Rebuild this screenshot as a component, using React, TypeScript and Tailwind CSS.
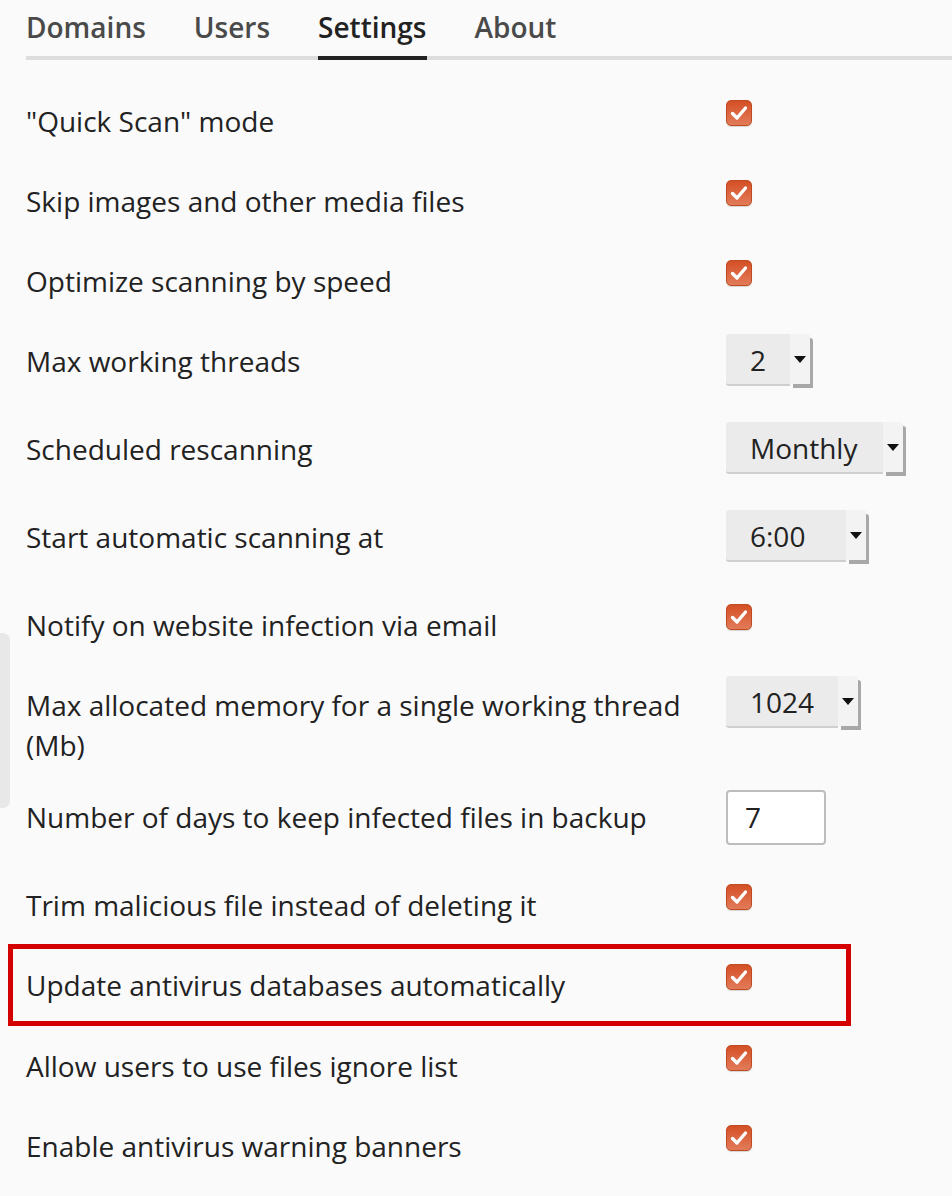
import { type ReactNode } from "react";

type Control =
  | { kind: "check" }
  | { kind: "select"; value: string; width: string }
  | { kind: "input"; value: string };

type Row = {
  label: string;
  control: Control;
  rowClass: string;
  highlight?: boolean;
};

const rows: Row[] = [
  { label: '"Quick Scan" mode', control: { kind: "check" }, rowClass: "h-[80px] items-center" },
  { label: "Skip images and other media files", control: { kind: "check" }, rowClass: "h-[80px] items-center" },
  { label: "Optimize scanning by speed", control: { kind: "check" }, rowClass: "h-[80px] items-center" },
  {
    label: "Max working threads",
    control: { kind: "select", value: "2", width: "w-[64px]" },
    rowClass: "h-[80px] items-center",
  },
  {
    label: "Scheduled rescanning",
    control: { kind: "select", value: "Monthly", width: "w-[157px]" },
    rowClass: "h-[96px] items-center",
  },
  {
    label: "Start automatic scanning at",
    control: { kind: "select", value: "6:00", width: "w-[120px]" },
    rowClass: "h-[80px] items-center",
  },
  { label: "Notify on website infection via email", control: { kind: "check" }, rowClass: "h-[96px] items-center" },
  {
    label: "Max allocated memory for a single working thread (Mb)",
    control: { kind: "select", value: "1024", width: "w-[112px]" },
    rowClass: "h-[104px] items-start pt-[12px]",
  },
  { label: "Number of days to keep infected files in backup", control: { kind: "input", value: "7" }, rowClass: "h-[80px] items-center" },
  { label: "Trim malicious file instead of deleting it", control: { kind: "check" }, rowClass: "h-[87px] items-center pt-[8px]" },
  { label: "Update antivirus databases automatically", control: { kind: "check" }, rowClass: "h-[82px] items-center", highlight: true },
  { label: "Allow users to use files ignore list", control: { kind: "check" }, rowClass: "h-[80px] items-center" },
  { label: "Enable antivirus warning banners", control: { kind: "check" }, rowClass: "h-[80px] items-center" },
];

function Checkbox() {
  return (
    <div className="mb-[16px] flex h-[26px] w-[26px] items-center justify-center rounded-[5px] border border-[#c04a22] bg-gradient-to-b from-[#d44f24] to-[#e27b58] shadow-[0_1px_1px_rgba(0,0,0,0.15)]">
      <svg width="18" height="16" viewBox="0 0 18 16" fill="none">
        <path
          d="M2.5 8.5 L7 13 L15.5 3"
          stroke="white"
          strokeWidth="3.4"
          strokeLinecap="round"
          strokeLinejoin="round"
        />
      </svg>
    </div>
  );
}

function Select({
  value,
  width,
  className,
}: {
  value: string;
  width: string;
  className?: string;
}) {
  return (
    <div className={"flex h-[54px] items-start " + (className ?? "")}>
      <div
        className={
          "flex h-[52px] items-center rounded-l-[3px] border-b-2 border-[#cfcfcf] bg-[#ebebeb] pt-[2px] pl-[24px] text-[28px] text-[#222] " +
          width
        }
      >
        {value}
      </div>
      <div className="flex h-[50px] w-[20px] items-center justify-center rounded-tr-[3px] bg-[#f3f3f3] shadow-[3px_4px_0_#a8a8a8]">
        <div className="h-0 w-0 border-t-[7px] border-r-[6px] border-l-[6px] border-t-[#111] border-r-transparent border-l-transparent" />
      </div>
    </div>
  );
}

function renderControl(control: Control, twoLine: boolean): ReactNode {
  if (control.kind === "check") return <Checkbox />;
  if (control.kind === "select")
    return (
      <Select
        value={control.value}
        width={control.width}
        className={twoLine ? "-mt-[9px]" : ""}
      />
    );
  return (
    <input
      readOnly
      value={control.value}
      className="h-[55px] w-[100px] rounded-[4px] border-2 border-[#bdbdbd] bg-white pl-[17px] text-[28px] text-[#222] outline-none"
      style={{ fontFamily: '"Open Sans", sans-serif' }}
    />
  );
}

export default function App() {
  const tabs = ["Domains", "Users", "Settings", "About"];

  return (
    <div
      className="relative h-[1196px] w-[952px] overflow-hidden bg-[#fafafa] text-[#222]"
      style={{ fontFamily: '"Open Sans", "Liberation Sans", sans-serif' }}
    >
      <div className="absolute top-[633px] left-0 h-[175px] w-[10px] rounded-r-[7px] bg-[#e8e8e8]" />

      <div className="ml-[26px] border-b-4 border-[#dddddd]">
        <div className="flex gap-[48px]">
          {tabs.map((t) => (
            <div
              key={t}
              className={
                t === "Settings"
                  ? "-mb-[4px] border-b-4 border-[#222] pt-[7px] pb-[9px] text-[28px] leading-[40px] font-semibold text-[#222]"
                  : "-mb-[4px] border-b-4 border-transparent pt-[7px] pb-[9px] text-[28px] leading-[40px] font-semibold text-[#4a4a4a]"
              }
            >
              {t}
            </div>
          ))}
        </div>
      </div>

      <div className="mt-[21px]">
        {rows.map((r) => (
          <div
            key={r.label}
            className={
              r.highlight
                ? "ml-[8px] flex w-[843px] border-[5px] border-[#d40000] pl-[13px] " + r.rowClass
                : "flex pl-[26px] " + r.rowClass
            }
          >
            <div className="w-[700px] shrink-0 pr-[16px] text-[28px] leading-[40px]">
              {r.label}
            </div>
            {renderControl(r.control, r.rowClass.includes("items-start"))}
          </div>
        ))}
      </div>
    </div>
  );
}
